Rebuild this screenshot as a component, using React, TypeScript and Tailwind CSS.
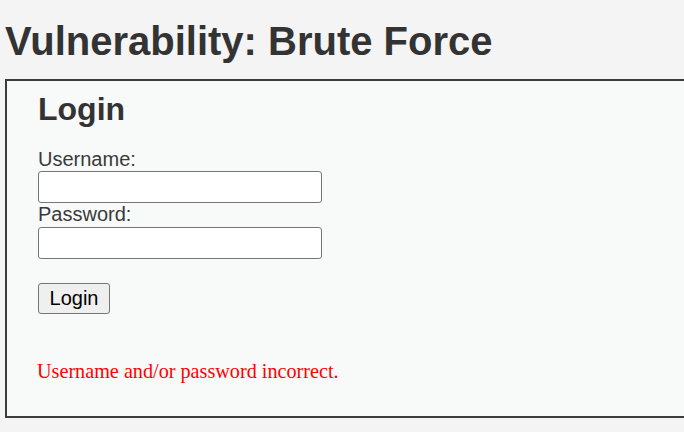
export default function App() {
  return (
    <div className="h-[432px] w-[684px] overflow-hidden bg-[#f4f4f4] font-['Liberation_Sans',Arial,sans-serif] text-[#333]">
      <h1 className="mt-[18px] pl-[5px] text-[40px] leading-[46px] font-bold">
        Vulnerability: Brute Force
      </h1>

      <div className="mt-[15px] ml-[5px] h-[339px] w-[720px] border-2 border-[#3c3c3c] bg-[#f8f9f9] pt-[10px] pl-[31px]">
        <h2 className="text-[32px] leading-[37px] font-bold">Login</h2>

        <form className="mt-[20px] flex flex-col items-start text-[20px] leading-[23px] text-[#3a3a3a]">
          <label htmlFor="username">Username:</label>
          <input
            id="username"
            type="text"
            className="h-[32px] w-[284px] rounded-[3px] border border-[#767676] bg-white"
          />
          <label htmlFor="password">Password:</label>
          <input
            id="password"
            type="password"
            className="mt-[1px] h-[32px] w-[284px] rounded-[3px] border border-[#767676] bg-white"
          />
          <button
            type="button"
            className="mt-[24px] h-[31px] w-[72px] rounded-[3px] border border-[#767676] bg-[#efefef] text-[20px] text-black"
          >
            Login
          </button>
        </form>

        <p className="mt-[46px] -ml-[1px] font-['Liberation_Serif','Times_New_Roman',serif] text-[20.2px] leading-[23px] text-[#ff0000]">
          Username and/or password incorrect.
        </p>
      </div>
    </div>
  );
}
